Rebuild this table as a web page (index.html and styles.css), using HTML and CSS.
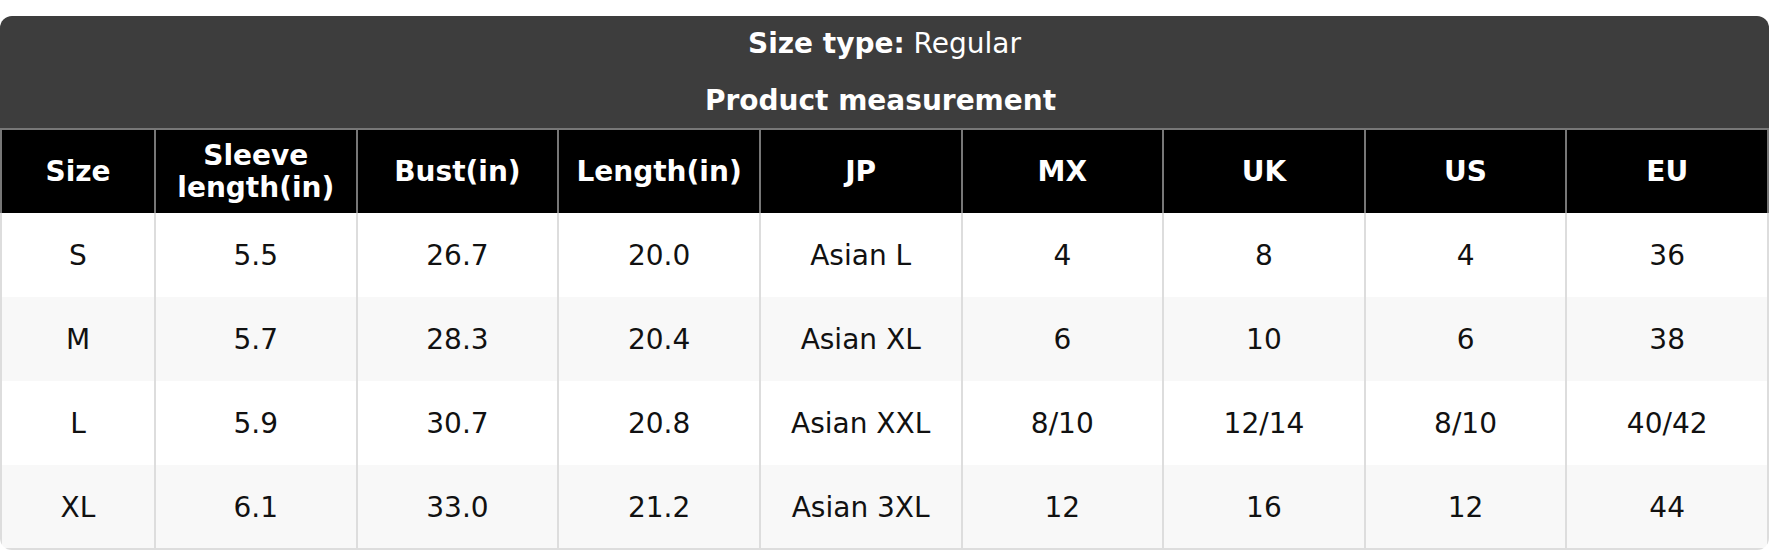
FILE: index.html
```html
<!DOCTYPE html>
<html lang="en">
<head>
<meta charset="utf-8">
<title>Size chart</title>
<link rel="stylesheet" href="styles.css">
</head>
<body>
<div class="chart">
  <div class="band">
    <div class="band-line"><strong>Size type:</strong> Regular</div>
    <div class="band-line band-title"><strong>Product measurement</strong></div>
  </div>
  <table class="sizes">
    <colgroup>
      <col class="col-size">
      <col><col><col><col><col><col><col><col>
    </colgroup>
    <thead>
      <tr>
        <th>Size</th>
        <th>Sleeve<br>length(in)</th>
        <th>Bust(in)</th>
        <th>Length(in)</th>
        <th>JP</th>
        <th>MX</th>
        <th>UK</th>
        <th>US</th>
        <th>EU</th>
      </tr>
    </thead>
    <tbody>
      <tr><td>S</td><td>5.5</td><td>26.7</td><td>20.0</td><td>Asian L</td><td>4</td><td>8</td><td>4</td><td>36</td></tr>
      <tr><td>M</td><td>5.7</td><td>28.3</td><td>20.4</td><td>Asian XL</td><td>6</td><td>10</td><td>6</td><td>38</td></tr>
      <tr><td>L</td><td>5.9</td><td>30.7</td><td>20.8</td><td>Asian XXL</td><td>8/10</td><td>12/14</td><td>8/10</td><td>40/42</td></tr>
      <tr><td>XL</td><td>6.1</td><td>33.0</td><td>21.2</td><td>Asian 3XL</td><td>12</td><td>16</td><td>12</td><td>44</td></tr>
    </tbody>
  </table>
</div>
</body>
</html>
```

FILE: styles.css
```css
html, body {
  margin: 0;
  padding: 0;
  background: #ffffff;
}

body {
  padding-top: 16px;
  font-family: "DejaVu Sans", Verdana, sans-serif;
  font-size: 28px;
  color: #000000;
}

.chart {
  width: 1769px;
  border-radius: 12px;
  overflow: hidden;
  background: #ffffff;
}

.band {
  background: #3d3d3d;
  color: #ffffff;
  text-align: center;
  height: 112px;
  box-sizing: border-box;
  padding-top: 12px;
}

.band-line {
  line-height: 32px;
  height: 32px;
}

.band-line strong {
  font-weight: bold;
}

.band-title {
  margin-top: 25px;
  padding-right: 8px;
}

.sizes {
  width: 1769px;
  border-collapse: collapse;
  table-layout: fixed;
}

.col-size {
  width: 154px;
}

.sizes th,
.sizes td {
  text-align: center;
  vertical-align: middle;
  padding: 0 4px;
  line-height: 32px;
}

.sizes th {
  background: #000000;
  color: #ffffff;
  font-weight: bold;
  height: 84px;
  box-sizing: border-box;
  border: 2px solid #777777;
  border-bottom: 0;
}

.sizes td {
  height: 84px;
  box-sizing: border-box;
  padding-top: 2px;
  border-left: 2px solid #dddddd;
  border-right: 2px solid #dddddd;
  color: #111111;
}

.sizes tbody tr:nth-child(even) td {
  background: #f8f8f8;
}

.sizes tbody tr:last-child td {
  border-bottom: 2px solid #dddddd;
}
```
